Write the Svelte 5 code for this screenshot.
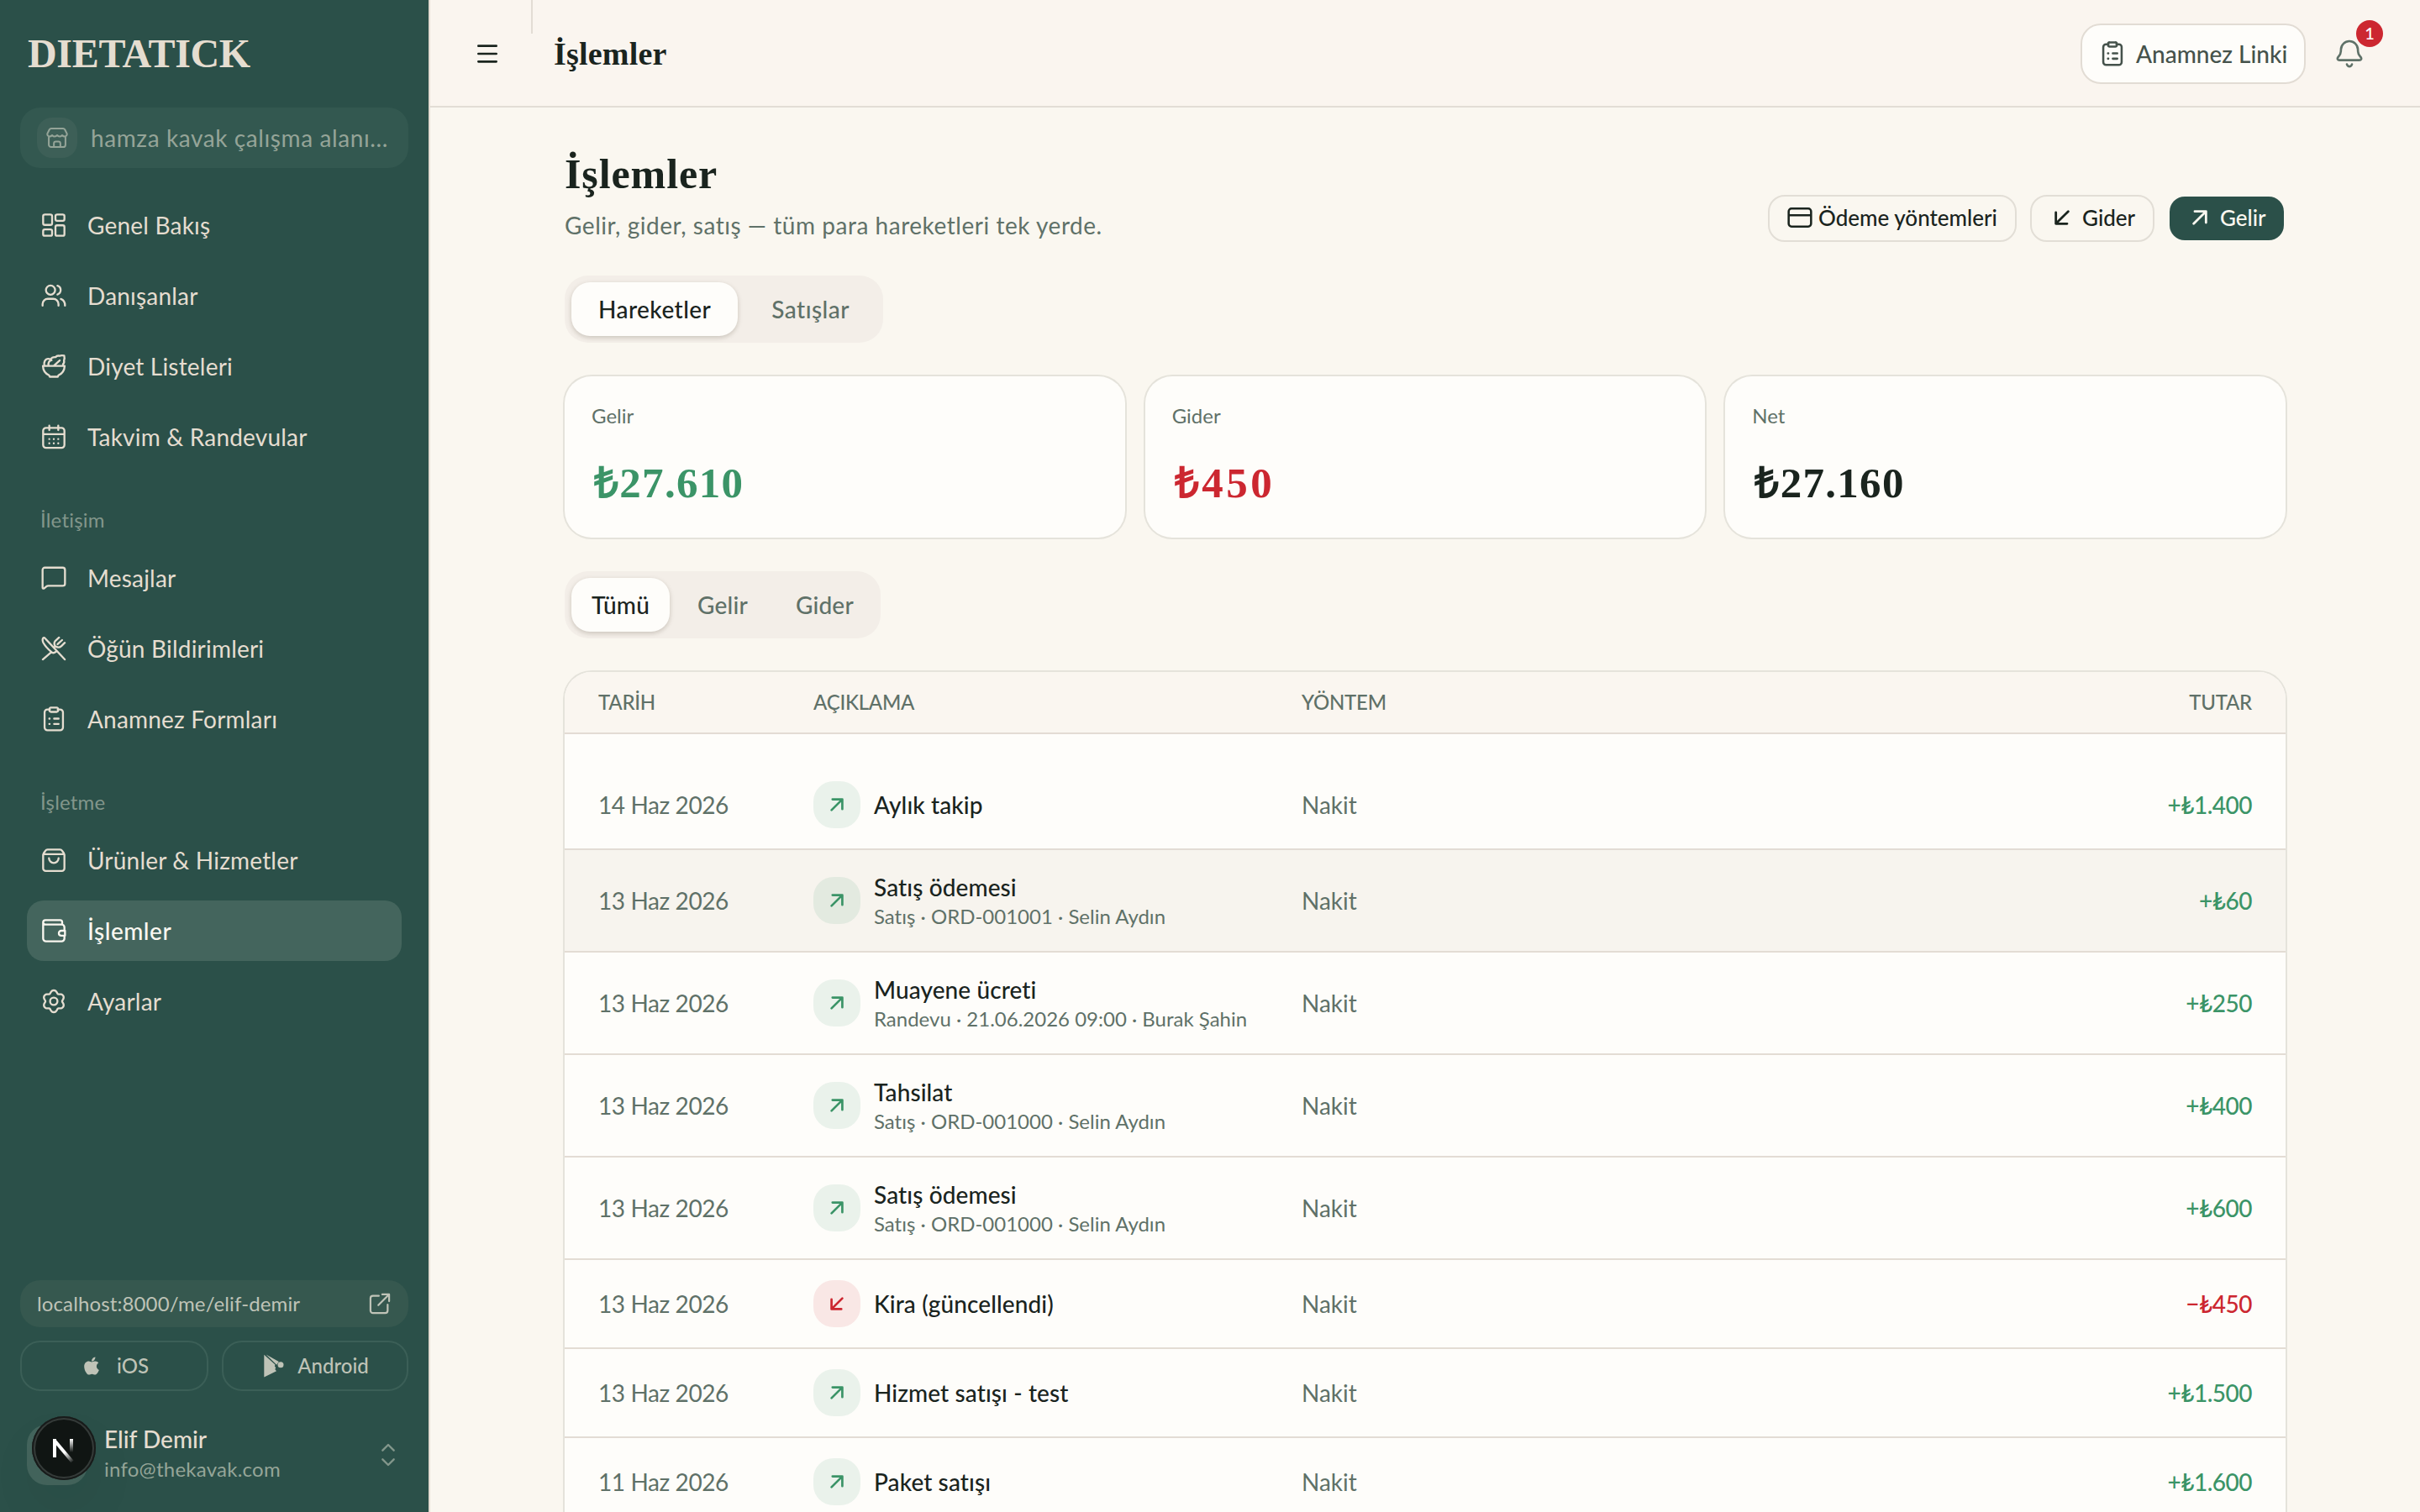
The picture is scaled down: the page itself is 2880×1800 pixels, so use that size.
<script>
    // outline of the settings cog, six soft teeth
    function cog() {
        let d = ""
        for (let a = 0; a < 360; a += 5) {
            const t = a * Math.PI / 180
            const r = 8.75 + 1.15 * Math.cos(6 * t) - 0.15 * Math.cos(12 * t)
            d += `${a ? "L" : "M"}${(12 + r * Math.sin(t)).toFixed(2)} ${(12 - r * Math.cos(t)).toFixed(2)}`
        }
        return d + "Z"
    }

    const icons = {
        grid: "M4 2.5h5A1.5 1.5 0 0 1 10.5 4v6.3a1.5 1.5 0 0 1-1.5 1.5H4a1.5 1.5 0 0 1-1.5-1.5V4A1.5 1.5 0 0 1 4 2.5zM4 15.9h5a1.5 1.5 0 0 1 1.5 1.5V20A1.5 1.5 0 0 1 9 21.5H4A1.5 1.5 0 0 1 2.5 20v-2.6A1.5 1.5 0 0 1 4 15.9zM15 2.5h5A1.5 1.5 0 0 1 21.5 4v2.6A1.5 1.5 0 0 1 20 8.1h-5a1.5 1.5 0 0 1-1.5-1.5V4A1.5 1.5 0 0 1 15 2.5zM15 12.2h5a1.5 1.5 0 0 1 1.5 1.5V20a1.5 1.5 0 0 1-1.5 1.5h-5a1.5 1.5 0 0 1-1.5-1.5v-6.3a1.5 1.5 0 0 1 1.5-1.5z",
        users: "M13.2 7a4.1 4.1 0 1 1-8.2 0a4.1 4.1 0 1 1 8.2 0zM2 20.8v-1.3A4.7 4.7 0 0 1 6.7 14.8h4.8a4.7 4.7 0 0 1 4.7 4.7v1.3M15.3 3.1a4.1 4.1 0 0 1 0 7.8M18.3 14.9c2.3.8 3.7 2.7 3.7 5.9",
        bowl: "M2.3 11.7h19.4a9.7 9.7 0 0 1-5.5 8.4l-.6 1.3H8.4l-.6-1.3a9.7 9.7 0 0 1-5.5-8.4zM3.6 11.5C2.9 8.3 4.2 5.8 6.5 5.4c1-.2 1.9.1 2.6.7M7.3 11.5c-.5-2.7.6-4.7 2.7-4.9M9.1 6c1-1.7 2.9-2.3 4.5-2.1.9-1.2 2.3-1.4 3.5-1.1 1.2-.6 2.7-.5 4.2-.2.4 1.5.4 3-.2 4.2.3 1.2.1 2.5-.8 3.3l-.1 1.4M12.3 11.4l5-4.6",
        calendar: "M8 2v4M16 2v4M5 4h14a2.5 2.5 0 0 1 2.5 2.5V19.3a2.5 2.5 0 0 1-2.5 2.5H5a2.5 2.5 0 0 1-2.5-2.5V6.5A2.5 2.5 0 0 1 5 4zM2.5 9.7h19M8 14h.01M12 14h.01M16 14h.01M8 17.8h.01M12 17.8h.01M16 17.8h.01",
        message: "M2 4.8a2 2 0 0 1 2-2h16a2 2 0 0 1 2 2v12.2a2 2 0 0 1-2 2H7.2c-.9 0-1.5.3-2.2.9l-1.5 1.3c-.7.5-1.5.3-1.5-.6z",
        meal: "M21.8 21.8L4.1 2.8c-.5-.6-1.3-.7-1.7 0-.6 1.2-.4 2.7.3 4.1 1.7 3.1 4.3 5.8 7.4 8.4 1.1.9 2.5.7 3.5-.2l.9-.8M9.8 15.2L2.2 21.8M16.7 2.2l-3.2 2.9c-1.2 1.3-1.3 3.2-.2 4.9 1.8 1.2 4 1.2 5.5-.2l3-2.9M19.4 4.5l-4 3.7M13.3 10l-1 1.1",
        clipboard: "M8.5 3.5H6.3a2.5 2.5 0 0 0-2.5 2.5v13.5A2.5 2.5 0 0 0 6.3 22h11.4a2.5 2.5 0 0 0 2.5-2.5V6a2.5 2.5 0 0 0-2.5-2.5h-2.2M9.5 1.8h5A1.2 1.2 0 0 1 15.9 3v1.3a1.3 1.3 0 0 1-1.4 1.3h-5a1.3 1.3 0 0 1-1.4-1.3V3a1.2 1.2 0 0 1 1.4-1.2zM12.3 11.6h4M12.3 16.4h4M8 11.6h.3M8 16.4h.3",
        bag: "M2.5 7.5v11.8a2.3 2.3 0 0 0 2.3 2.3h14.4a2.3 2.3 0 0 0 2.3-2.3V7.5c0-.6-.2-1.2-.5-1.7l-1.5-2.2a2.5 2.5 0 0 0-2-1.1h-11a2.5 2.5 0 0 0-2 1.1L3 5.8c-.3.5-.5 1.1-.5 1.7zM2.8 6.7h18.4M7.7 10.2a4.3 4.3 0 0 0 8.6 0",
        wallet: "M19.5 6.5V4.3a1.8 1.8 0 0 0-1.8-1.8H4.5a2 2 0 0 0 0 4h14.5a2.5 2.5 0 0 1 2.5 2.5v2.8M2.5 4.5v14.5a2.5 2.5 0 0 0 2.5 2.5h14a2.5 2.5 0 0 0 2.5-2.5v-2.5M22 12h-3.3a2.2 2.2 0 0 0 0 4.4H22z",
        settings: cog() + "M15.3 12a3.3 3.3 0 1 1-6.6 0a3.3 3.3 0 1 1 6.6 0z",
        store: "M3.5 11.5v7.5a2.5 2.5 0 0 0 2.5 2.5h12a2.5 2.5 0 0 0 2.5-2.5v-7.5M6 2.5h12c1 0 1.5.4 1.9 1.1L22 7.8c.2 1.6-.7 2.9-2.3 2.9-1.5 0-2-.6-2.6-1.3-.7.8-1.4 1.3-2.6 1.3S12.6 10.2 12 9.4c-.6.8-1.3 1.3-2.5 1.3s-1.9-.5-2.6-1.3c-.6.7-1.1 1.3-2.6 1.3C2.7 10.7 1.8 9.4 2 7.8l2.1-4.2C4.5 2.9 5 2.5 6 2.5zM8.7 21.3v-3.5a2 2 0 0 1 2-2h2.6a2 2 0 0 1 2 2v3.5",
        menu: "M4 5h16M4 12h16M4 19h16",
        bell: "M3.2 14.4c1.1-1.3 1.9-2 2-4.2l.1-1.7A6.75 6.75 0 0 1 12 2a6.75 6.75 0 0 1 6.7 6.5l.1 1.7c.1 2.2.9 2.9 2 4.2 1.2 1.5.6 2.7-1 2.7H4.2c-1.6 0-2.2-1.2-1-2.7zM10 20.4c.4 1.1 1.1 1.7 2 1.7s1.6-.6 2-1.7",
        card: "M4.5 4h15A2.5 2.5 0 0 1 22 6.5v11a2.5 2.5 0 0 1-2.5 2.5h-15A2.5 2.5 0 0 1 2 17.5v-11A2.5 2.5 0 0 1 4.5 4zM2 10h20",
        down: "M17.5 6.5l-11 11M6.5 7.5v10h10",
        up: "M6.5 17.5l11-11M7.5 6.5h10v10",
        external: "M11 4H5a2.5 2.5 0 0 0-2.5 2.5V19A2.5 2.5 0 0 0 5 21.5h12.5A2.5 2.5 0 0 0 20 19v-6M10.5 13.5L21 3M14.5 2.5h7v7",
        sort: "M7 8l5-5 5 5M7 16l5 5 5-5"
    }

    const groups = [
        { items: [["grid", "Genel Bakış"], ["users", "Danışanlar"], ["bowl", "Diyet Listeleri"], ["calendar", "Takvim & Randevular"]] },
        { label: "İletişim", items: [["message", "Mesajlar"], ["meal", "Öğün Bildirimleri"], ["clipboard", "Anamnez Formları"]] },
        { label: "İşletme", items: [["bag", "Ürünler & Hizmetler"], ["wallet", "İşlemler"], ["settings", "Ayarlar"]] }
    ]
    const current = "İşlemler"

    const totals = [
        { label: "Gelir", value: "₺27.610", tone: "income" },
        { label: "Gider", value: "₺450", tone: "expense" },
        { label: "Net", value: "₺27.160", tone: "net" }
    ]

    const rows = [
        { date: "14 Haz 2026", title: "Aylık takip", amount: "+₺1.400" },
        { date: "13 Haz 2026", title: "Satış ödemesi", sub: "Satış · ORD-001001 · Selin Aydın", amount: "+₺60", hover: true },
        { date: "13 Haz 2026", title: "Muayene ücreti", sub: "Randevu · 21.06.2026 09:00 · Burak Şahin", amount: "+₺250" },
        { date: "13 Haz 2026", title: "Tahsilat", sub: "Satış · ORD-001000 · Selin Aydın", amount: "+₺400" },
        { date: "13 Haz 2026", title: "Satış ödemesi", sub: "Satış · ORD-001000 · Selin Aydın", amount: "+₺600" },
        { date: "13 Haz 2026", title: "Kira (güncellendi)", amount: "−₺450", expense: true },
        { date: "13 Haz 2026", title: "Hizmet satışı - test", amount: "+₺1.500" },
        { date: "11 Haz 2026", title: "Paket satışı", amount: "+₺1.600" }
    ]
</script>

{#snippet icon(name, size = 32, weight = 1.75)}
    <svg class="icon" width={size} height={size} viewBox="0 0 24 24" stroke-width={weight}>
        <path d={icons[name]} />
    </svg>
{/snippet}

<div class="app">
    <aside>
        <div class="logo">DIETATICK</div>
        <div class="workspace">
            <span class="shop">{@render icon("store", 28)}</span>
            <span class="name">hamza kavak çalışma alanı...</span>
        </div>
        <nav>
            {#each groups as group}
                {#if group.label}<div class="label">{group.label}</div>{/if}
                <ul>
                    {#each group.items as [name, text]}
                        <li class:active={text === current}>{@render icon(name)}{text}</li>
                    {/each}
                </ul>
            {/each}
        </nav>
        <div class="profile-link">
            <span>localhost:8000/me/elif-demir</span>
            {@render icon("external", 28, 1.9)}
        </div>
        <div class="stores">
            <div class="store">
                <svg class="solid" width="18" height="24" viewBox="0 0 384 512">
                    <path d="M318.7 268.7c-.2-36.7 16.4-64.4 50-84.8-18.8-26.9-47.2-41.7-84.7-44.6-35.5-2.8-74.3 20.7-88.5 20.7-15 0-49.4-19.7-76.4-19.7C63.3 141.2 4 184.8 4 273.5q0 39.3 14.4 81.2c12.8 36.7 59 126.7 107.2 125.2 25.2-.6 43-17.9 75.8-17.9 31.8 0 48.3 17.9 76.4 17.9 48.6-.7 90.4-82.5 102.6-119.3-65.2-30.7-61.7-90-61.7-91.9zm-56.6-164.2c27.3-32.4 24.8-61.9 24-72.5-24.1 1.4-52 16.4-67.9 34.9-17.5 19.8-27.8 44.3-25.6 71.9 26.1 2 49.9-11.4 69.5-34.3z" />
                </svg>
                iOS
            </div>
            <div class="store android">
                <svg class="solid" width="26" height="28" viewBox="0 0 26 28">
                    <path d="M1.3 0.8V27.6L16 20.2l-1.6-1.9.7-2.2-1.2-1.6.5-2z" />
                    <path d="M3.6 0.5L18.8 9l-2.6 3.7z" />
                    <circle cx="21" cy="12.8" r="3.5" />
                </svg>
                Android
            </div>
        </div>
        <div class="user">
            <div class="avatar">
                <div class="next">
                    <svg width="76" height="76" viewBox="0 0 76 76">
                        <defs>
                            <linearGradient id="diag" gradientUnits="userSpaceOnUse" x1="39" y1="43" x2="49" y2="55">
                                <stop offset="0" stop-color="#fff" />
                                <stop offset="1" stop-color="#fff" stop-opacity="0" />
                            </linearGradient>
                            <linearGradient id="stem" gradientUnits="userSpaceOnUse" x1="0" y1="27" x2="0" y2="43">
                                <stop offset="0" stop-color="#fff" />
                                <stop offset="1" stop-color="#fff" stop-opacity="0" />
                            </linearGradient>
                        </defs>
                        <path d="M27 29L48 54" fill="none" stroke="url(#diag)" stroke-width="4" />
                        <path d="M25 27h4v22h-4z" fill="#fff" />
                        <path d="M45 27h4v17h-4z" fill="url(#stem)" />
                    </svg>
                </div>
            </div>
            <div class="who">
                <b>Elif Demir</b>
                <span>info@thekavak.com</span>
            </div>
            {@render icon("sort", 32, 1.8)}
        </div>
    </aside>

    <div class="page">
        <header>
            <div class="burger">{@render icon("menu", 32, 2)}</div>
            <div class="divider"></div>
            <div class="crumb">İşlemler</div>
            <div class="form-link">{@render icon("clipboard", 32, 1.9)}Anamnez Linki</div>
            <div class="bell">
                {@render icon("bell", 36)}
                <span class="badge">1</span>
            </div>
        </header>

        <main>
            <div class="heading">
                <div>
                    <h1>İşlemler</h1>
                    <p>Gelir, gider, satış — tüm para hareketleri tek yerde.</p>
                </div>
                <div class="actions">
                    <div class="btn methods">{@render icon("card", 32, 1.9)}Ödeme yöntemleri</div>
                    <div class="btn expense-btn">{@render icon("down", 32, 2.1)}Gider</div>
                    <div class="btn primary">{@render icon("up", 32, 2.1)}Gelir</div>
                </div>
            </div>

            <div class="tabs">
                <span class="on">Hareketler</span>
                <span>Satışlar</span>
            </div>

            <div class="cards">
                {#each totals as total}
                    <div class="card">
                        <span>{total.label}</span>
                        <strong class={total.tone}>{total.value}</strong>
                    </div>
                {/each}
            </div>

            <div class="tabs small">
                <span class="on">Tümü</span>
                <span>Gelir</span>
                <span>Gider</span>
            </div>

            <div class="table">
                <div class="row head">
                    <span>TARİH</span>
                    <span>AÇIKLAMA</span>
                    <span>YÖNTEM</span>
                    <span class="right">TUTAR</span>
                </div>
                {#each rows as row}
                    <div class="row" class:hover={row.hover} class:expense={row.expense}>
                        <span class="date">{row.date}</span>
                        <div class="desc">
                            <span class="dir">{@render icon(row.expense ? "down" : "up", 28, 2.3)}</span>
                            <div>
                                <div class="title">{row.title}</div>
                                {#if row.sub}<div class="sub">{row.sub}</div>{/if}
                            </div>
                        </div>
                        <span class="method">Nakit</span>
                        <span class="amount right">{row.amount}</span>
                    </div>
                {/each}
            </div>
        </main>
    </div>
</div>

<style>
    .app {
        display: flex;
        width: 2880px;
        height: 1800px;
        overflow: hidden;
        background: #faf7f0;
        color: #1a241e;
        font-family: Lato, "Open Sans", sans-serif;
        font-size: 28px;
        font-variant-ligatures: none;
        line-height: 40px;
    }
    .icon {
        flex: none;
        fill: none;
        stroke: currentColor;
        stroke-linecap: round;
        stroke-linejoin: round;
    }
    .solid {
        flex: none;
        fill: currentColor;
    }

    aside {
        box-sizing: border-box;
        width: 512px;
        flex: none;
        display: flex;
        flex-direction: column;
        padding: 36px 24px 32px;
        background: #2b5049;
        border-right: 2px solid #e4dcd2;
        color: #e5ddd0;
    }
    .logo {
        height: 56px;
        padding-left: 9px;
        font-family: "Liberation Serif", serif;
        font-weight: 700;
        font-size: 48px;
        line-height: 56px;
        letter-spacing: -0.3px;
    }
    .workspace {
        display: flex;
        align-items: center;
        gap: 16px;
        height: 72px;
        margin-top: 36px;
        padding: 0 20px;
        border-radius: 24px;
        background: #335850;
        color: #95a498;
    }
    .shop {
        display: flex;
        align-items: center;
        justify-content: center;
        width: 48px;
        height: 48px;
        border-radius: 18px;
        background: #3d5f57;
    }
    .name {
        letter-spacing: 0.6px;
        white-space: nowrap;
    }
    nav {
        flex: 1;
        margin-top: 32px;
        padding: 0 8px;
    }
    ul {
        display: flex;
        flex-direction: column;
        gap: 12px;
        margin: 0;
        padding: 0;
        list-style: none;
    }
    li {
        display: flex;
        align-items: center;
        gap: 24px;
        height: 72px;
        padding: 0 16px;
        border-radius: 20px;
        letter-spacing: 0.2px;
    }
    li.active {
        background: #44655d;
        color: #faf7f0;
        font-weight: 500;
        letter-spacing: 0.5px;
    }
    .label {
        margin-top: 32px;
        padding: 0 16px 2px;
        color: #82968b;
        font-size: 24px;
        line-height: 62px;
        letter-spacing: 0.2px;
    }
    .profile-link {
        display: flex;
        align-items: center;
        justify-content: space-between;
        height: 56px;
        padding: 0 20px;
        border-radius: 24px;
        background: #36584f;
        color: #bfc3b7;
        font-size: 24px;
        letter-spacing: 0.12px;
    }
    .stores {
        display: grid;
        grid-template-columns: 224px 1fr;
        gap: 16px;
        margin-top: 16px;
    }
    .store {
        box-sizing: border-box;
        display: flex;
        align-items: center;
        justify-content: center;
        gap: 21px;
        height: 60px;
        padding-left: 5px;
        border: 2px solid #3b5f57;
        border-radius: 24px;
        color: #bfc3b7;
        font-weight: 500;
        font-size: 24px;
    }
    .android {
        gap: 15px;
        padding-left: 2px;
    }
    .user {
        display: flex;
        align-items: center;
        height: 72px;
        margin-top: 40px;
        padding: 0 8px;
        color: #82968b;
    }
    .avatar {
        position: relative;
        width: 72px;
        height: 72px;
        border-radius: 24px;
        background: #44655d;
    }
    /* dev indicator floats over the avatar */
    .next {
        position: absolute;
        left: 6px;
        top: -10px;
        width: 76px;
        height: 76px;
        border-radius: 50%;
        background: #101513;
        box-shadow: inset 0 0 0 2px #171b1a, inset 0 0 0 4px #353b39, 0 32px 64px rgba(0, 0, 0, 0.06);
    }
    .who {
        flex: 1;
        display: flex;
        flex-direction: column;
        gap: 3px;
        margin: 0 0 3px 20px;
        color: #95a598;
        font-size: 24px;
        line-height: 32px;
        letter-spacing: 0.25px;
    }
    .who b {
        color: #e5ddd0;
        font-weight: 500;
        font-size: 28px;
        line-height: 34px;
        letter-spacing: 0;
    }

    .page {
        flex: 1;
        min-width: 0;
    }
    header {
        box-sizing: border-box;
        display: flex;
        align-items: center;
        height: 128px;
        padding: 2px 48px 0 36px;
        background: #faf5ef;
        border-bottom: 2px solid #e2ddd5;
    }
    .burger {
        display: flex;
        justify-content: center;
        width: 64px;
    }
    .divider {
        align-self: flex-start;
        width: 2px;
        height: 40px;
        margin: -2px 25px 0 20px;
        background: #e2dcd4;
    }
    .crumb {
        flex: 1;
        font-family: "Liberation Serif", serif;
        font-weight: 700;
        font-size: 38px;
        letter-spacing: 0.2px;
    }
    .form-link {
        box-sizing: border-box;
        display: flex;
        align-items: center;
        gap: 12px;
        width: 268px;
        height: 72px;
        padding-left: 20px;
        border: 2px solid #e2dcd4;
        border-radius: 24px;
        background: #fefdfa;
        color: #45524b;
        font-weight: 500;
        white-space: nowrap;
    }
    .bell {
        position: relative;
        display: flex;
        align-items: center;
        justify-content: center;
        width: 72px;
        height: 72px;
        margin-left: 16px;
        color: #5f7168;
    }
    .badge {
        position: absolute;
        top: -4px;
        right: -4px;
        width: 32px;
        height: 32px;
        border-radius: 50%;
        background: #cc2730;
        color: #fff;
        font-weight: 500;
        font-size: 20px;
        line-height: 31px;
        text-align: center;
    }

    main {
        padding: 48px 160px 0;
    }
    .heading {
        display: flex;
        align-items: flex-end;
        justify-content: space-between;
        margin-bottom: 40px;
    }
    h1 {
        margin: 0 0 10px;
        font-family: "Liberation Serif", serif;
        font-weight: 700;
        font-size: 50px;
        line-height: 62px;
        letter-spacing: 0.9px;
    }
    p {
        margin: 0;
        color: #5f7168;
        letter-spacing: 0.53px;
    }
    .actions {
        display: flex;
        gap: 16px;
    }
    .btn {
        box-sizing: border-box;
        display: flex;
        align-items: center;
        gap: 8px;
        width: 140px;
        height: 56px;
        padding: 0 0 2px 20px;
        border: 2px solid #e2ded6;
        border-radius: 20px;
        font-weight: 500;
        font-size: 26px;
        white-space: nowrap;
    }
    .methods {
        gap: 6px;
        width: 296px;
    }
    .expense-btn {
        width: 148px;
    }
    .primary {
        background: #2b5049;
        background-clip: padding-box;
        border-color: transparent;
        color: #faf7f0;
    }

    .tabs {
        display: inline-flex;
        gap: 8px;
        box-sizing: border-box;
        height: 80px;
        padding: 8px;
        border-radius: 28px;
        background: #f3eee8;
        vertical-align: top;
    }
    .tabs span {
        padding: 0 32px;
        border-radius: 22px;
        color: #5f7168;
        font-weight: 500;
        line-height: 64px;
        letter-spacing: 0.45px;
    }
    .tabs.small {
        gap: 9px;
    }
    .tabs.small span {
        padding: 0 24px;
        letter-spacing: 0.2px;
    }
    .tabs .on {
        background: #fefdfa;
        color: #1a241e;
        box-shadow: 0 2px 6px rgba(60, 50, 30, 0.14), 0 2px 4px rgba(60, 50, 30, 0.08);
    }

    .cards {
        display: grid;
        grid-template-columns: repeat(3, 1fr);
        gap: 24px;
        margin: 40px 0;
    }
    .card {
        box-sizing: border-box;
        display: flex;
        flex-direction: column;
        height: 192px;
        padding: 31px 32px;
        border-radius: 32px;
        background: #fefdfa;
        box-shadow: 0 0 0 2px #e5e3db;
    }
    .card span {
        color: #5f7168;
        font-size: 24px;
        line-height: 32px;
    }
    .card strong {
        margin: 32px 0 0 3px;
        font-family: "Liberation Serif", serif;
        font-size: 51px;
        line-height: 64px;
        letter-spacing: 1.3px;
    }
    .card .income {
        color: #3b9467;
    }
    .card .expense {
        color: #cc2730;
        letter-spacing: 3.5px;
    }

    /* the list runs on below the fold, so only the top corners are rounded */
    .table {
        margin-top: 40px;
        border-radius: 32px 32px 0 0;
        background: #fefdfa;
        box-shadow: 0 0 0 2px #e5e3db;
        overflow: hidden;
    }
    .row {
        display: grid;
        grid-template-columns: 256px 581px 1fr 300px;
        align-items: center;
        padding: 24px 40px;
        border-bottom: 2px solid #e3dcd4;
        color: #5f7168;
    }
    .head {
        height: 71px;
        padding: 0 40px 1px;
        background: #faf6f0;
        font-weight: 500;
        font-size: 24px;
        letter-spacing: -0.25px;
    }
    .head + .row {
        padding-top: 56px;
    }
    .hover {
        background: #f7f4ee;
    }
    .date {
        letter-spacing: -0.4px;
    }
    .desc {
        display: flex;
        align-items: center;
        gap: 16px;
        white-space: nowrap;
    }
    .dir {
        display: flex;
        align-items: center;
        justify-content: center;
        width: 56px;
        height: 56px;
        border-radius: 24px;
        background: rgba(59, 148, 103, 0.1);
        color: #3b9467;
    }
    .title {
        color: #1a241e;
        font-weight: 500;
        letter-spacing: 0.1px;
    }
    .sub {
        padding-bottom: 2px;
        font-size: 24px;
        line-height: 30px;
    }
    .amount {
        color: #3b9467;
        font-weight: 500;
        letter-spacing: -0.5px;
    }
    .right {
        text-align: right;
    }
    .expense .amount {
        color: #cc2730;
    }
    .expense .dir {
        background: rgba(204, 39, 48, 0.1);
        color: #cc2730;
    }
</style>
